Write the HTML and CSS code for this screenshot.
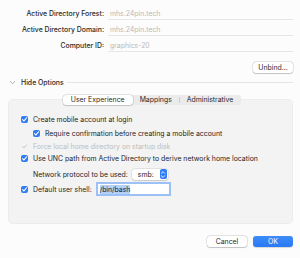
FILE: index.html
```html
<!DOCTYPE html>
<html>
<head>
<meta charset="utf-8">
<link rel="stylesheet" href="styles.css">
</head>
<body>
<div class="win">
  <div class="fields">
    <div class="label">Active Directory Forest:</div><div class="value">mhs.24pin.tech</div>
    <div class="label">Active Directory Domain:</div><div class="value">mhs.24pin.tech</div>
    <div class="label">Computer ID:</div><div class="value">graphics-20</div>
  </div>
  <div class="unbind-row"><span class="btn">Unbind...</span></div>
  <div class="disclosure">
    <svg class="chev" width="7" height="5" viewBox="0 0 7 5"><path d="M1 1.2 L3.5 3.6 L6 1.2" fill="none" stroke="#a8a8a8" stroke-width="0.9"/></svg>
    <span class="disc-label">Hide Options</span>
    <span class="rule"></span>
  </div>
  <div class="tabs-row">
    <div class="tabs">
      <span class="tab sel">User Experience</span>
      <span class="tab">Mappings</span>
      <span class="sep"></span>
      <span class="tab">Administrative</span>
    </div>
  </div>
  <div class="panel">
    <div class="row r1"><span class="cb"><svg width="7" height="7" viewBox="0 0 7 7"><path d="M1.6 3.7 L2.9 5 L5.5 1.9" fill="none" stroke="#fff" stroke-width="1.1" stroke-linecap="round" stroke-linejoin="round"/></svg></span><span>Create mobile account at login</span></div>
    <div class="row r2"><span class="cb"><svg width="7" height="7" viewBox="0 0 7 7"><path d="M1.6 3.7 L2.9 5 L5.5 1.9" fill="none" stroke="#fff" stroke-width="1.1" stroke-linecap="round" stroke-linejoin="round"/></svg></span><span>Require confirmation before creating a mobile account</span></div>
    <div class="row r3"><span class="cb off"><svg width="7" height="7" viewBox="0 0 7 7"><path d="M1.6 3.7 L2.9 5 L5.5 1.9" fill="none" stroke="#c4c4c4" stroke-width="1" stroke-linecap="round" stroke-linejoin="round"/></svg></span><span>Force local home directory on startup disk</span></div>
    <div class="row r4"><span class="cb"><svg width="7" height="7" viewBox="0 0 7 7"><path d="M1.6 3.7 L2.9 5 L5.5 1.9" fill="none" stroke="#fff" stroke-width="1.1" stroke-linecap="round" stroke-linejoin="round"/></svg></span><span>Use UNC path from Active Directory to derive network home location</span></div>
    <div class="row r5"><span>Network protocol to be used:</span>
      <span class="popup"><span class="pv">smb:</span><span class="step"><svg width="6" height="9" viewBox="0 0 6 9"><path d="M1.3 3.3 L3 1.6 L4.7 3.3 M1.3 5.7 L3 7.4 L4.7 5.7" fill="none" stroke="#fff" stroke-width="0.9" stroke-linecap="round" stroke-linejoin="round"/></svg></span></span>
    </div>
    <div class="row r6"><span class="cb"><svg width="7" height="7" viewBox="0 0 7 7"><path d="M1.6 3.7 L2.9 5 L5.5 1.9" fill="none" stroke="#fff" stroke-width="1.1" stroke-linecap="round" stroke-linejoin="round"/></svg></span><span>Default user shell:</span>
      <span class="field"><span class="selt">/bin/bash</span></span>
    </div>
  </div>
  <div class="buttons">
    <span class="btn cancel">Cancel</span>
    <span class="btn ok">OK</span>
  </div>
</div>
</body>
</html>
```
FILE: styles.css
```css
html, body {
  margin: 0;
  padding: 0;
  background: #fcfcfc;
}
body {
  width: 300px;
  height: 258px;
  overflow: hidden;
  font-family: Inter, "Liberation Sans", sans-serif;
  font-size: 6.9px;
  color: #262626;
}
.win {
  display: flex;
  flex-direction: column;
  padding: 8px 7px 0 8px;
}
.fields {
  display: grid;
  grid-template-columns: 96px 1fr;
  row-gap: 4px;
  column-gap: 4px;
}
.label {
  text-align: right;
  line-height: 12px;
  color: #2a2a2a;
  font-weight: 500;
}
.value {
  line-height: 11px;
  color: #b9b9b9;
  border-bottom: 1px solid #e6e6e6;
  padding-left: 2px;
}
.unbind-row {
  display: flex;
  justify-content: flex-end;
  margin-top: 10px;
}
.btn {
  display: inline-flex;
  align-items: center;
  justify-content: center;
  height: 11px;
  width: 40px;
  background: #fff;
  border-radius: 3px;
  box-shadow: 0 0 0 0.5px rgba(0,0,0,0.18), 0 0.5px 1px rgba(0,0,0,0.15);
  color: #2a2a2a;
}
.disclosure {
  display: flex;
  align-items: center;
  margin-top: 4px;
  height: 10px;
}
.chev { margin-left: 1px; margin-right: 5px; }
.disc-label { color: #2a2a2a; font-weight: 500; }
.rule {
  flex: 1;
  height: 1px;
  background: #e4e4e4;
  margin-left: 3px;
}
.tabs-row {
  display: flex;
  justify-content: center;
  margin-top: 8px;
  position: relative;
  z-index: 1;
  padding-left: 3px;
}
.tabs {
  display: flex;
  align-items: center;
  height: 10px;
  background: #ebebeb;
  border-radius: 3px;
  padding: 0 1px 0 0;
}
.tab {
  height: 10px;
  line-height: 10px;
  padding: 0 7px;
  color: #2a2a2a;
}
.tab.sel {
  background: #fff;
  border-radius: 3px;
  box-shadow: 0 0 0 0.5px rgba(0,0,0,0.18), 0 0.5px 1px rgba(0,0,0,0.12);
  padding: 0 8px;
}
.sep {
  width: 1px;
  height: 6px;
  background: #cfcfcf;
}
.panel {
  box-sizing: border-box;
  margin-top: -6px;
  background: #f3f3f3;
  border-radius: 5px;
  border: 0.5px solid #ececec;
  height: 125px;
  padding: 13px 0 0 12px;
  display: flex;
  flex-direction: column;
}
.row {
  display: flex;
  align-items: center;
  height: 12px;
  gap: 5px;
}
.r2 { padding-left: 12px; margin-top: 2px; }
.r3 { color: #bdbdbd; margin-top: 1px; }
.r5 { padding-left: 12px; margin-top: 4px; gap: 4px; }
.r6 { margin-top: 3px; }
.cb {
  width: 7px;
  height: 7px;
  border-radius: 2px;
  background: #2f7cf6;
  display: inline-flex;
  flex: none;
}
.cb.off { background: transparent; }
.popup {
  display: inline-flex;
  align-items: center;
  height: 11px;
  width: 36px;
  background: #fff;
  border-radius: 3px;
  box-shadow: 0 0 0 0.5px rgba(0,0,0,0.12), 0 0.5px 1px rgba(0,0,0,0.12);
  justify-content: space-between;
  padding-left: 6px;
  box-sizing: border-box;
}
.step {
  width: 7px;
  height: 10px;
  background: #2f7cf6;
  border-radius: 2px;
  display: inline-flex;
  align-items: center;
  justify-content: center;
  margin-right: 1px;
}
.field {
  width: 69px;
  height: 10px;
  background: #fff;
  box-shadow: 0 0 0 2px #9dc0f6;
  display: inline-flex;
  align-items: center;
  padding-left: 2px;
  margin-left: 1px;
}
.selt {
  background: #b2d0f8;
  color: #1a1a1a;
  line-height: 9px;
}
.buttons {
  display: flex;
  justify-content: flex-end;
  gap: 6px;
  margin-top: 12px;
}
.ok {
  background: linear-gradient(#3d8cf8, #2a78f4);
  color: #fff;
  box-shadow: 0 0.5px 1px rgba(0,0,0,0.15);
}
```
